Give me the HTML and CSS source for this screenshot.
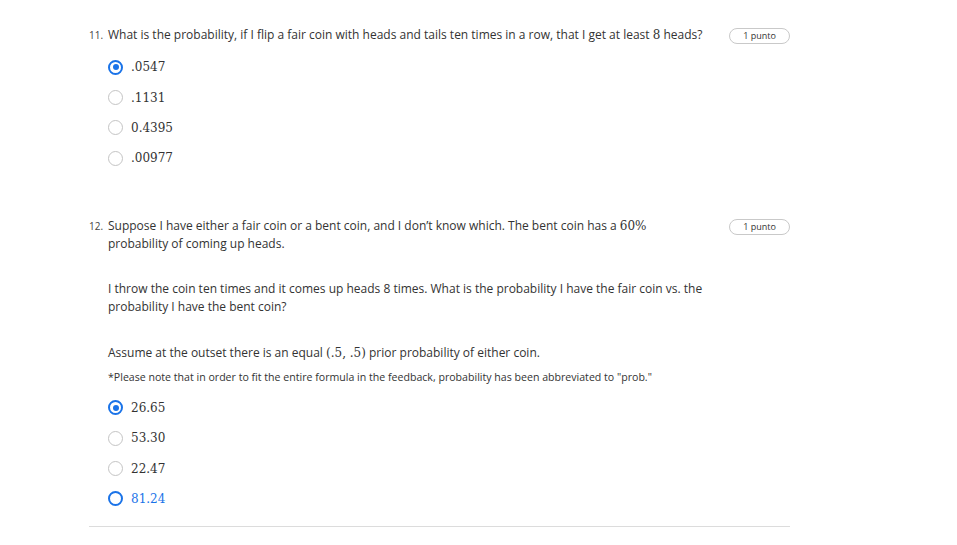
FILE: index.html
```html
<!DOCTYPE html>
<html>
<head>
<meta charset="utf-8">
<link rel="stylesheet" href="styles.css">
</head>
<body>
<div class="page">
  <div class="question q11">
    <div class="qhead">
      <span class="num">11.</span>
      <div class="qbody">
        <p class="qtext">What is the probability, if I flip a fair coin with heads and tails ten times in a row, that I get at least <span class="math">8</span> heads?</p>
      </div>
      <span class="badge">1 punto</span>
    </div>
    <ul class="options">
      <li class="opt"><span class="radio checked"></span><span class="val">.0547</span></li>
      <li class="opt"><span class="radio"></span><span class="val">.1131</span></li>
      <li class="opt"><span class="radio"></span><span class="val">0.4395</span></li>
      <li class="opt"><span class="radio"></span><span class="val">.00977</span></li>
    </ul>
  </div>

  <div class="question q12">
    <div class="qhead">
      <span class="num">12.</span>
      <div class="qbody">
        <p class="qtext">Suppose I have either a fair coin or a bent coin, and I don’t know which. The bent coin has a <span class="math">60%</span> probability of coming up heads.</p>
        <p class="qtext para">I throw the coin ten times and it comes up heads 8 times. What is the probability I have the fair coin vs. the probability I have the bent coin?</p>
        <p class="qtext para para2">Assume at the outset there is an equal <span class="math">(.5, .5)</span> prior probability of either coin.</p>
        <p class="note">*Please note that in order to fit the entire formula in the feedback, probability has been abbreviated to "prob."</p>
      </div>
      <span class="badge">1 punto</span>
    </div>
    <ul class="options">
      <li class="opt"><span class="radio checked"></span><span class="val">26.65</span></li>
      <li class="opt"><span class="radio"></span><span class="val">53.30</span></li>
      <li class="opt"><span class="radio"></span><span class="val">22.47</span></li>
      <li class="opt focus"><span class="radio blue"></span><span class="val">81.24</span></li>
    </ul>
  </div>
</div>
</body>
</html>
```

FILE: styles.css
```css
* { box-sizing: border-box; }
html, body { margin: 0; padding: 0; background: #fff; }
body { font-family: "Open Sans", sans-serif; color: #333; }
.page {
  width: 701px;
  margin-left: 89px;
  padding-top: 26px;
  border-bottom: 1px solid #dcdcdc;
  padding-bottom: 12px;
}
.q12 { margin-top: 43px; }
.qhead { display: flex; align-items: flex-start; }
.num { width: 19px; font-size: 10px; line-height: 18px; color: #444; flex: none; }
.qbody { width: 600px; flex: none; }
.qtext { margin: 0; font-size: 12px; line-height: 18px; color: #333; }
.para { margin-top: 27px; }
.para2 { margin-top: 28px; }
.note { margin: 8px 0 0; font-size: 10.6px; line-height: 14px; color: #333; }
.math { font-family: "DejaVu Serif", "Liberation Serif", serif; font-size: 12px; }
.badge {
  margin-left: auto;
  margin-top: 2px;
  width: 61px;
  height: 16px;
  border: 1px solid #c9c9c9;
  border-radius: 9px;
  font-size: 9px;
  line-height: 14px;
  text-align: center;
  color: #333;
  flex: none;
}
.options { list-style: none; margin: 8px 0 0; padding: 0 0 0 19px; }
.q12 .options { margin-top: 9px; }
.opt { display: flex; align-items: center; height: 30.4px; }
.radio {
  width: 15px; height: 15px;
  border: 1.5px solid #c4c4c4;
  border-radius: 50%;
  margin-right: 8px;
  position: relative;
  flex: none;
}
.radio.checked { border: 2px solid #1a73e8; }
.radio.checked::after {
  content: "";
  position: absolute;
  left: 2.5px; top: 2.5px;
  width: 6px; height: 6px;
  border-radius: 50%;
  background: #1a73e8;
}
.radio.blue { border: 2px solid #1a73e8; }
.val { font-family: "DejaVu Serif", "Liberation Serif", serif; font-size: 12px; color: #333; }
.focus .val { color: #1a73e8; }
```
